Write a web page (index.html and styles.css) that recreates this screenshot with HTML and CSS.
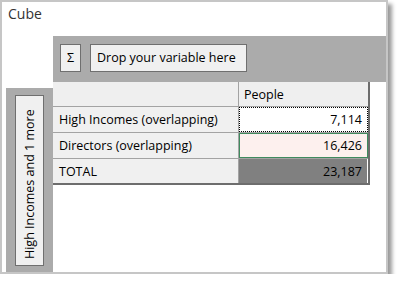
FILE: index.html
```html
<!DOCTYPE html>
<html>
<head>
<meta charset="utf-8">
<link rel="stylesheet" href="styles.css">
</head>
<body>
<div class="window">
  <div class="title">Cube</div>
  <div class="pivot">
    <div class="colzone">
      <div class="btn sigma">Σ</div>
      <div class="btn drop">Drop your variable here</div>
    </div>
    <div class="rowzone">
      <div class="btn vbtn"><span>High Incomes and 1 more</span></div>
    </div>
    <div class="tablewrap">
      <div class="grid">
        <div class="cell c1 hdr"></div>
        <div class="cell c2 hdr">People</div>
        <div class="cell c1 rowh">High Incomes (overlapping)</div>
        <div class="cell c2 val"><div class="inner focus">7,114</div></div>
        <div class="cell c1 rowh">Directors (overlapping)</div>
        <div class="cell c2 val"><div class="inner sel">16,426</div></div>
        <div class="cell c1 rowh last">TOTAL</div>
        <div class="cell c2 val last"><div class="inner total">23,187</div></div>
      </div>
    </div>
  </div>
</div>
</body>
</html>
```
FILE: styles.css
```css
html, body {
  margin: 0;
  padding: 0;
  background: #ffffff;
}
body {
  font-family: "Open Sans", "Noto Sans", sans-serif;
  color: #000;
}
.window {
  box-sizing: border-box;
  width: 388px;
  height: 274px;
  border: 2px solid #c6c6c6;
  background: #fff;
  box-shadow: 4px 4px 4px rgba(0, 0, 0, 0.4);
  display: flex;
  flex-direction: column;
}
.title {
  height: 34px;
  box-sizing: border-box;
  padding: 2px 0 0 6px;
  font-size: 14px;
  line-height: 20px;
  color: #333;
}
.pivot {
  flex: 1;
  display: grid;
  grid-template-columns: 4px 47px 1fr;
  grid-template-rows: 46px 1fr;
}
.colzone {
  grid-column: 3;
  grid-row: 1;
  background: #ababab;
  display: flex;
  align-items: flex-start;
  gap: 9px;
  padding: 8px 0 0 7px;
}
.btn {
  box-sizing: border-box;
  border: 1px solid #6f6f6f;
  background: #f0f0f0;
  font-size: 12.5px;
}
.sigma {
  width: 21px;
  height: 28px;
  line-height: 26px;
  text-align: center;
}
.drop {
  width: 157px;
  height: 28px;
  line-height: 26px;
  padding-left: 6px;
  white-space: nowrap;
}
.rowzone {
  grid-column: 2;
  grid-row: 2;
  margin-top: 6px;
  background: #ababab;
  padding: 7px 9px 6px 9px;
  display: flex;
}
.vbtn {
  width: 29px;
  flex: 1;
  writing-mode: vertical-rl;
  transform: rotate(180deg);
  display: flex;
  align-items: center;
  justify-content: center;
  white-space: nowrap;
  padding-bottom: 7px;
}
.tablewrap {
  grid-column: 3;
  grid-row: 2;
}
.grid {
  display: grid;
  grid-template-columns: 186px 129px;
  grid-template-rows: 25px 26px 26px 24px;
  width: max-content;
  border-right: 2px solid #6d6d6d;
  border-bottom: 2px solid #6d6d6d;
  font-size: 12.5px;
}
.cell {
  box-sizing: border-box;
  border-bottom: 1px solid #a3a3a3;
  display: flex;
  align-items: center;
  white-space: nowrap;
}
.cell.last {
  border-bottom: none;
}
.c1 {
  border-right: 1px solid #a3a3a3;
}
.hdr {
  background: #efefef;
  padding-left: 5px;
}
.rowh {
  background: #f0f0f0;
  padding-left: 6px;
}
.val {
  background: #fff;
  align-items: stretch;
}
.inner {
  flex: 1;
  box-sizing: border-box;
  display: flex;
  align-items: center;
  justify-content: flex-end;
  padding-right: 5px;
}
.focus {
  border: 1px dotted #000;
  background: #fff;
}
.sel {
  border: 1px solid #3f8a5e;
  background: #fdf0ee;
}
.total {
  background: #808080;
  margin-right: 1px;
}
```
